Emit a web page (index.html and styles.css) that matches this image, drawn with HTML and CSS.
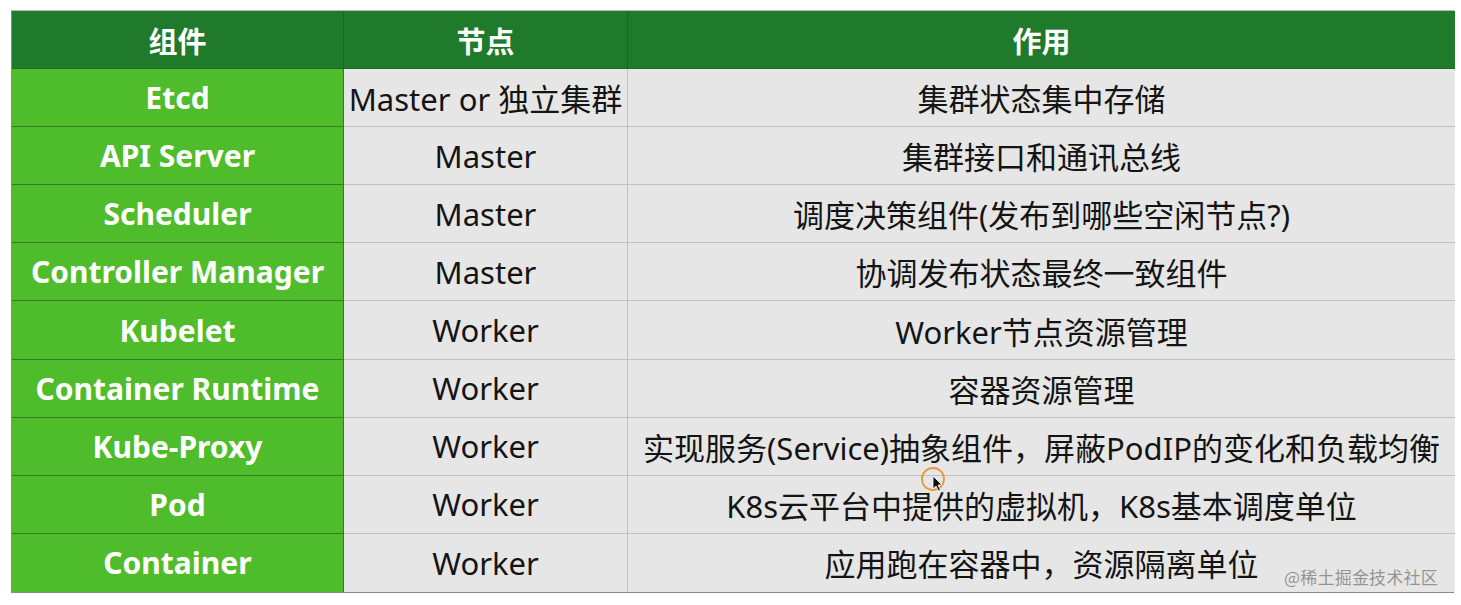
FILE: index.html
```html
<!DOCTYPE html>
<html lang="zh">
<head>
<meta charset="utf-8">
<title>K8s 组件</title>
<link rel="stylesheet" href="styles.css">
</head>
<body>
<div class="page">
  <div class="grid">
    <div class="cell head">组件</div>
    <div class="cell head">节点</div>
    <div class="cell head last">作用</div>

    <div class="cell comp">Etcd</div>
    <div class="cell node">Master or 独立集群</div>
    <div class="cell desc">集群状态集中存储</div>

    <div class="cell comp">API Server</div>
    <div class="cell node">Master</div>
    <div class="cell desc">集群接口和通讯总线</div>

    <div class="cell comp">Scheduler</div>
    <div class="cell node">Master</div>
    <div class="cell desc">调度决策组件(发布到哪些空闲节点?)</div>

    <div class="cell comp">Controller Manager</div>
    <div class="cell node">Master</div>
    <div class="cell desc">协调发布状态最终一致组件</div>

    <div class="cell comp">Kubelet</div>
    <div class="cell node">Worker</div>
    <div class="cell desc">Worker节点资源管理</div>

    <div class="cell comp">Container Runtime</div>
    <div class="cell node">Worker</div>
    <div class="cell desc">容器资源管理</div>

    <div class="cell comp">Kube-Proxy</div>
    <div class="cell node">Worker</div>
    <div class="cell desc">实现服务(Service)抽象组件，屏蔽PodIP的变化和负载均衡</div>

    <div class="cell comp">Pod</div>
    <div class="cell node">Worker</div>
    <div class="cell desc">K8s云平台中提供的虚拟机，K8s基本调度单位</div>

    <div class="cell comp bottom">Container</div>
    <div class="cell node bottom">Worker</div>
    <div class="cell desc bottom">应用跑在容器中，资源隔离单位</div>
  </div>
  <div class="cursor">
    <svg width="32" height="32" viewBox="0 0 32 32">
      <circle cx="13" cy="13" r="11" fill="none" stroke="#e39a3c" stroke-width="1.8"/>
      <path d="M13 10 L13 23 L16 20 L18.5 25 L20.5 24 L18 19 L22 19 Z" fill="#111" stroke="#fff" stroke-width="0.8"/>
    </svg>
  </div>
  <div class="watermark">@稀土掘金技术社区</div>
</div>
</body>
</html>
```

FILE: styles.css
```css
html, body {
  margin: 0;
  padding: 0;
  background: #ffffff;
}
.page {
  position: relative;
  width: 1461px;
  height: 605px;
  padding: 10px 0 0 11px;
  box-sizing: border-box;
}
.grid {
  display: grid;
  grid-template-columns: 332px 284px 827px;
  grid-template-rows: repeat(10, 1fr);
  width: 1443px;
  height: 583px;
  border: 1px solid #8a8a8a;
  border-top-color: #bcbcbc;
  box-sizing: border-box;
  font-family: "Noto Sans", "Noto Sans CJK SC", sans-serif;
  font-size: 31px;
}
.cell {
  display: flex;
  align-items: center;
  justify-content: center;
  white-space: nowrap;
  border-right: 1px solid rgba(0, 0, 0, 0.16);
  border-bottom: 1px solid rgba(0, 0, 0, 0.16);
  box-sizing: border-box;
}
.head {
  background: #1f7a2b;
  color: #ffffff;
  font-weight: 700;
  font-size: 29px;
  border-bottom-color: rgba(0, 0, 0, 0.12);
}
.last, .desc {
  border-right: none;
}
.comp {
  background: #4fbd2b;
  color: #ffffff;
  font-weight: 700;
  font-size: 30px;
  border-bottom-color: rgba(0, 0, 0, 0.35);
  border-right-color: rgba(0, 0, 0, 0.35);
}
.node, .desc {
  background: #e6e6e6;
  color: #141414;
}
.bottom {
  border-bottom: none;
}
.cursor {
  position: absolute;
  left: 920px;
  top: 466px;
  width: 32px;
  height: 32px;
}
.watermark {
  position: absolute;
  left: 1284px;
  top: 564px;
  font-family: "Noto Sans CJK SC", sans-serif;
  font-size: 17px;
  color: rgba(120, 120, 120, 0.75);
  letter-spacing: 0.2px;
}
```
